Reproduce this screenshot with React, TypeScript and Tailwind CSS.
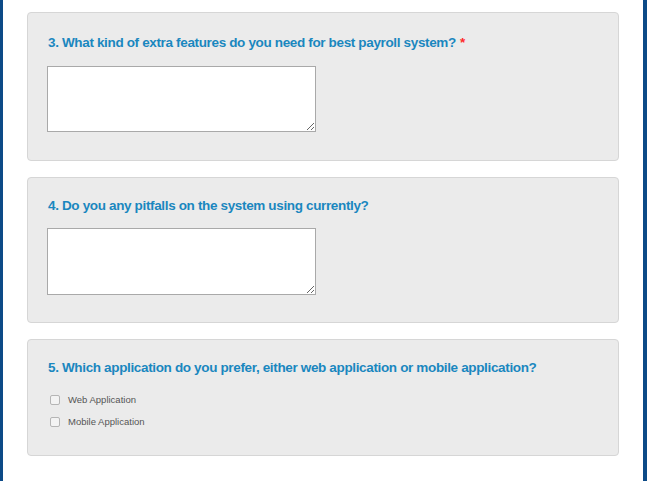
import React from "react";

function Title({ text, required }: { text: string; required?: boolean }) {
  return (
    <h3 className="text-[13.5px] font-bold leading-[16px] tracking-[-0.35px] text-[#1a87bf]">
      {text}
      {required && <span className="ml-[4px] text-[#ff2b2b]">*</span>}
    </h3>
  );
}

function Check({ label }: { label: string }) {
  return (
    <label className="flex h-[22px] items-center">
      <span className="ml-[2px] h-[10px] w-[10px] rounded-[2px] border border-[#b5b5b5] bg-[#f3f3f3]" />
      <span className="ml-[8px] text-[9.5px] text-[#555]">{label}</span>
    </label>
  );
}

export default function App() {
  return (
    <div
      className="flex h-[481px] w-[647px] overflow-hidden bg-white"
      style={{ fontFamily: '"Liberation Sans", Arial, sans-serif' }}
    >
      <div className="w-[3px] bg-[#0c4a87]" />
      <div className="flex flex-1 flex-col gap-4 px-6 pt-3">
        <div className="rounded border border-[#d6d6d6] bg-[#ebebeb] px-5 pt-[22px] pb-[28px]">
          <Title text="3. What kind of extra features do you need for best payroll system?" required />
          <textarea className="-ml-px mt-[15px] block h-[66px] w-[269px] resize border border-[#a9a9a9] bg-white outline-none" />
        </div>
        <div className="rounded border border-[#d6d6d6] bg-[#ebebeb] px-5 pt-[20px] pb-[27px]">
          <Title text="4. Do you any pitfalls on the system using currently?" />
          <textarea className="-ml-px mt-[14px] block h-[67px] w-[269px] resize border border-[#a9a9a9] bg-white outline-none" />
        </div>
        <div className="rounded border border-[#d6d6d6] bg-[#ebebeb] px-5 pt-[20px] pb-[22px]">
          <Title text="5. Which application do you prefer, either web application or mobile application?" />
          <div className="mt-[13px]">
            <Check label="Web Application" />
            <Check label="Mobile Application" />
          </div>
        </div>
      </div>
      <div className="w-[4px] bg-[#0c4a87]" />
    </div>
  );
}
